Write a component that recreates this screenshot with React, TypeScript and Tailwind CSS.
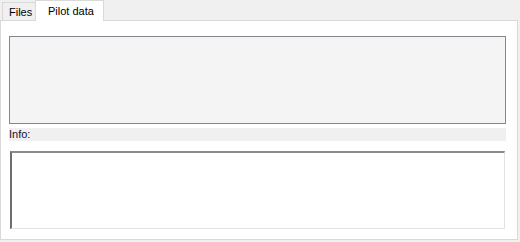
export default function App() {
  return (
    <div
      className="w-[520px] h-[242px] bg-[#f0f0f0] text-[11px] text-black overflow-hidden"
      style={{ fontFamily: '"Liberation Sans", Arial, sans-serif' }}
    >
      {/* tab strip */}
      <div className="flex items-end h-[20px] pl-[2px]">
        <div className="h-[18px] w-[34px] pl-[6px] pt-[2px] border border-b-0 border-[#d9d9d9] bg-[#f0f0f0] leading-[14px]">
          Files
        </div>
        <div className="relative z-10 h-[21px] w-[69px] -ml-px -mb-px pl-[12px] pt-[3px] bg-white border border-b-0 border-[#d9d9d9] leading-[14px]">
          Pilot data
        </div>
      </div>
      {/* tab page */}
      <div className="w-[518px] h-[220px] border border-[#d9d9d9] bg-white pt-[15px] pl-[8px]">
        <div className="w-[497px] h-[88px] border border-[#828790] bg-[#f4f4f4]" />
        <div className="mt-[4px] w-[497px] h-[13px] bg-[#f0f0f0] leading-[13px] text-[#0f0f30]">
          Info:
        </div>
        <div className="mt-[10px] ml-px w-[495px] h-[78px] bg-white border-t-2 border-l-2 border-t-[#8a8a8a] border-l-[#6e6e6e] border-r border-b border-r-[#e3e3e3] border-b-[#e3e3e3]" />
      </div>
    </div>
  )
}
